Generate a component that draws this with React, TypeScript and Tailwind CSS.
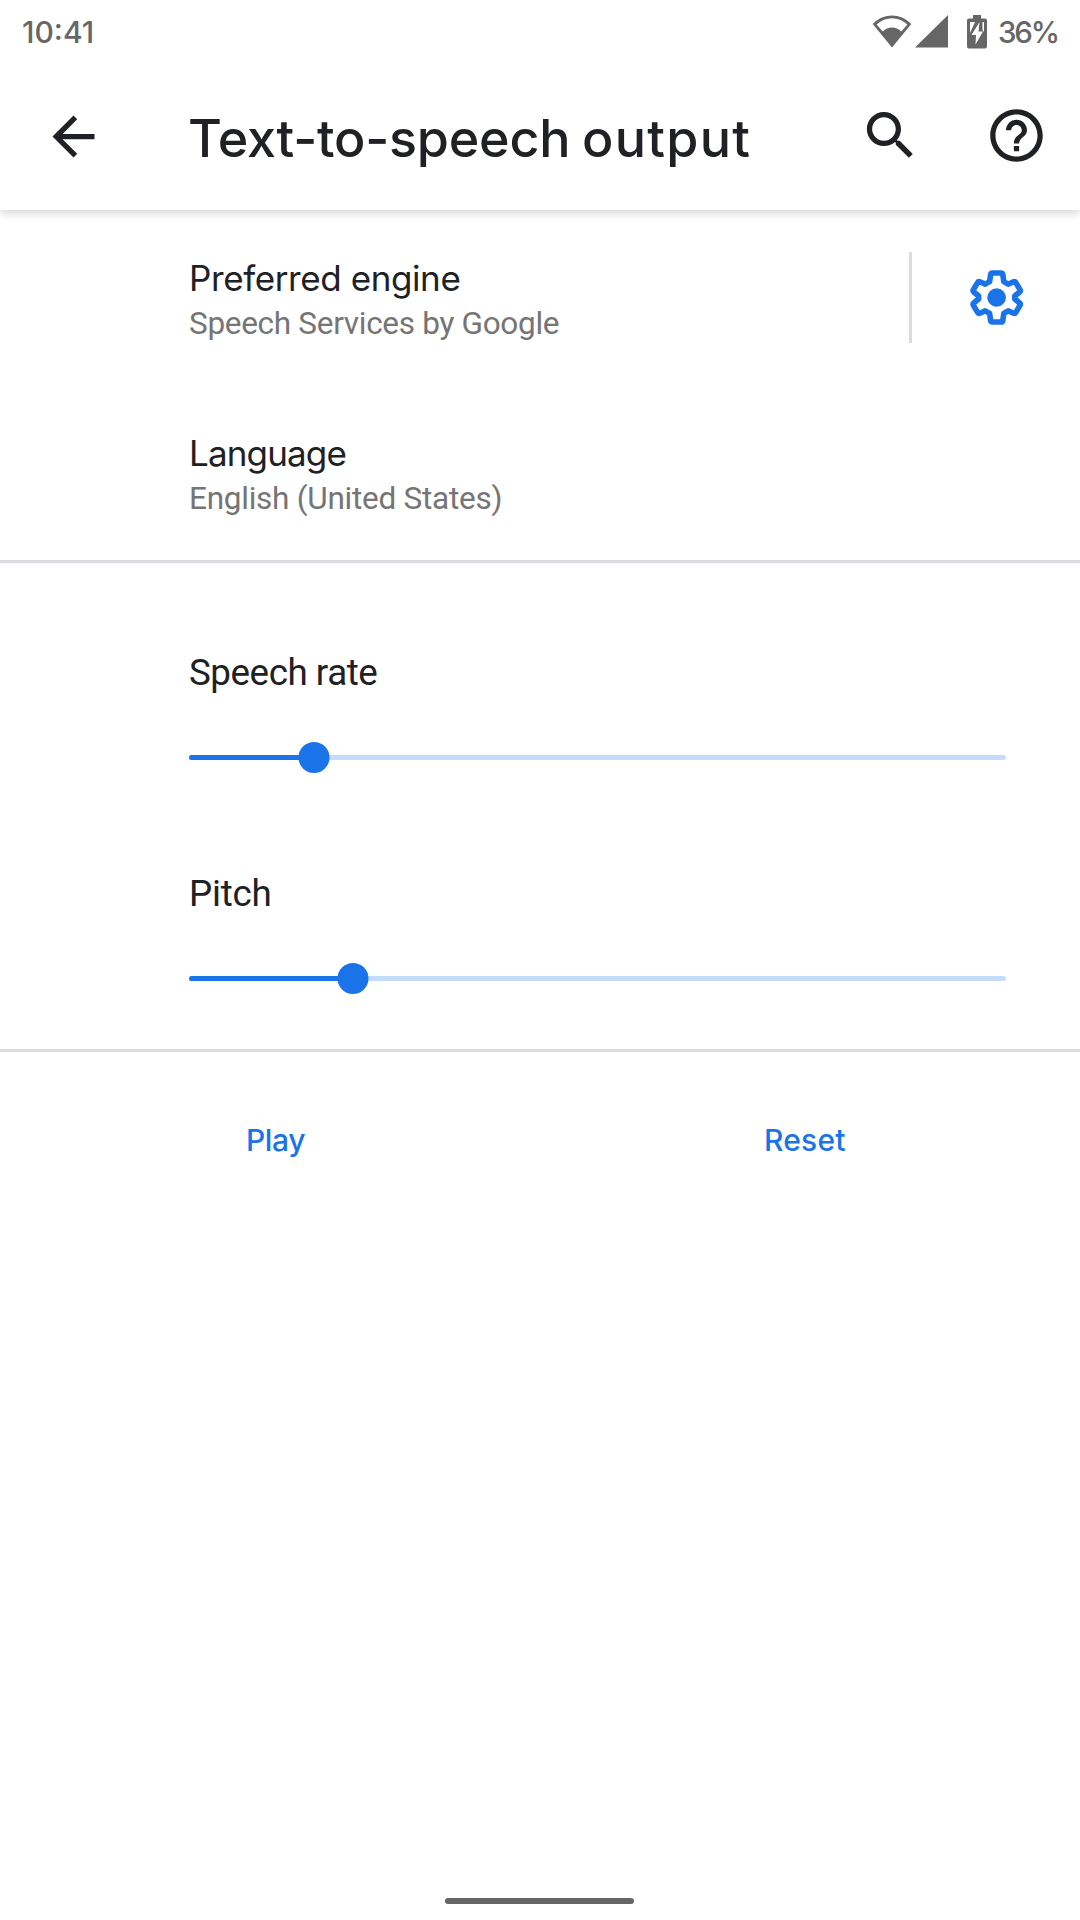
import React from "react";

const sans = "font-['Inter','Roboto',sans-serif]";

function StatusBar() {
  return (
    <div className={`relative z-10 flex h-16 items-center justify-between bg-white pl-[22px] pr-[22px] text-[#666666] ${sans}`}>
      <span className="text-[30px] leading-[64px] font-medium tracking-[0px]">10:41</span>
      <div className="flex items-center">
        <svg width="40" height="34" viewBox="0 0 40 34" fill="#666666">
          <path fillRule="evenodd" d="M.7 9C12-2.2 28-2.2 39.3 9L20 32.5ZM4.6 9.5L10.8 16.5C15.5 11.3 24.5 11.3 29.2 16.5L35.4 9.5C26 1.3 14 1.3 4.6 9.5Z" />
        </svg>
        <svg className="ml-[3px]" width="33" height="34" viewBox="0 0 33 34" fill="#666666">
          <path d="M33 0V32.5H0Z" />
        </svg>
        <svg className="ml-[19px]" width="20" height="34" viewBox="0 0 20 34" fill="#666666">
          <path fillRule="evenodd" d="M6 0H14V3.5H18Q20 3.5 20 5.5V31.5Q20 33.5 18 33.5H2Q0 33.5 0 31.5V5.5Q0 3.5 2 3.5H6ZM3 7V18L8 7ZM15.5 7V15L17 17V7ZM12.5 7L4.5 20H9L8.5 29.5L16 16.5H11.5Z" />
        </svg>
        <span className="ml-[11px] text-[29.5px] leading-[64px] font-medium tracking-[-2.1px]">36%</span>
      </div>
    </div>
  );
}

function Header() {
  return (
    <header className="flex h-[146px] items-start bg-white pl-[42px] shadow-[0_2px_9px_1px_rgba(0,0,0,0.17)]">
      <svg className="mt-[41px] shrink-0" width="63" height="63" viewBox="0 0 24 24" fill="#202124">
        <path d="M20 11H7.83l5.59-5.59L12 4l-8 8 8 8 1.41-1.41L7.83 13H20v-2z" />
      </svg>
      <h1 className={`ml-[83px] mt-[40px] w-[641px] shrink-0 text-[52px] leading-[70px] font-medium tracking-[-0.2px] [word-spacing:-2px] whitespace-nowrap text-[#202124] ${sans}`}>
        Text-to-speech <span className="tracking-[1.3px]">output</span>
      </h1>
      <svg className="ml-[30px] mt-[40px] shrink-0" width="63" height="63" viewBox="0 0 24 24" fill="#202124">
        <path d="M15.5 14h-.79l-.28-.27C15.41 12.59 16 11.11 16 9.5 16 5.91 13.09 3 9.5 3S3 5.91 3 9.5 5.91 16 9.5 16c1.61 0 3.09-.59 4.23-1.57l.27.28v.79l5 4.99L20.49 19l-4.99-5zm-6 0C7.01 14 5 11.99 5 9.5S7.01 5 9.5 5 14 7.01 14 9.5 11.99 14 9.5 14z" />
      </svg>
      <svg className="ml-[63px] mt-[40px] shrink-0" width="63" height="63" viewBox="0 0 24 24" fill="#202124">
        <path d="M11 18h2v-2h-2v2zm1-16C6.48 2 2 6.48 2 12s4.48 10 10 10 10-4.48 10-10S17.52 2 12 2zm0 18c-4.41 0-8-3.59-8-8s3.59-8 8-8 8 3.59 8 8-3.59 8-8 8zm0-14c-2.21 0-4 1.79-4 4h2c0-1.1.9-2 2-2s2 .9 2 2c0 2-3 1.75-3 5h2c0-2.25 3-2.5 3-5 0-2.21-1.79-4-4-4z" />
      </svg>
    </header>
  );
}

function Slider({ fill }: { fill: number }) {
  return (
    <div className="relative mr-[74px] flex h-[31px] items-center">
      <div className="h-[5px] w-full rounded-full bg-[#c5dbfa]">
        <div className="h-full rounded-full bg-[#1a73e8]" style={{ width: fill }} />
      </div>
      <div className="absolute top-0 size-[31px] -translate-x-1/2 rounded-full bg-[#1a73e8]" style={{ left: fill }} />
    </div>
  );
}

export default function App() {
  return (
    <div className="flex h-[1920px] w-[1080px] flex-col overflow-hidden bg-white font-['Roboto',sans-serif]">
      <StatusBar />
      <Header />

      <section className="h-[353px] border-b-[3px] border-[#dadce0] pl-[189px]">
        <div className="flex h-[175px] items-center">
          <div className="w-[720px] pt-[6px]">
            <p className={`text-[35px] leading-[44px] tracking-[-0.4px] text-[#202124] ${sans}`}>Preferred engine</p>
            <p className="mt-[2px] text-[31.5px] leading-[44px] tracking-[-0.3px] text-[#757575]">Speech Services by Google</p>
          </div>
          <div className="h-[91px] w-[3px] bg-[#dadce0]" />
          <svg className="ml-[53px]" width="63" height="63" viewBox="0 0 63 63" fill="none">
            <path d="M27.5 7H36Q37.6 7 37.8 8.5L38.8 15.6L43.2 18.2L48.4 15.8Q50 15.2 50.8 16.6L55 23.6Q55.8 25 54.6 26L49.8 30V33L54.6 37Q55.8 38 55 39.4L50.8 46.4Q50 47.8 48.4 47.2L43.2 44.8L38.8 47.4L37.8 54.5Q37.6 56 36 56H27.5Q25.8 56 25.6 54.5L24.6 47.4L20.2 44.8L15 47.2Q13.4 47.8 12.6 46.4L8.4 39.4Q7.6 38 8.8 37L13.6 33V30L8.8 26Q7.6 25 8.4 23.6L12.6 16.6Q13.4 15.2 15 15.8L20.2 18.2L24.6 15.6L25.6 8.5Q25.8 7 27.5 7Z" stroke="#1a73e8" strokeWidth="5.6" strokeLinejoin="round" />
            <circle cx="31.6" cy="31.5" r="9.3" fill="#1a73e8" />
          </svg>
        </div>
        <div className="h-[175px] pt-[46px]">
          <p className={`text-[35px] leading-[44px] tracking-[-0.85px] text-[#202124] ${sans}`}>Language</p>
          <p className="mt-[2px] text-[31.5px] leading-[44px] tracking-[-0.25px] text-[#757575]">English (United States)</p>
        </div>
      </section>

      <section className="h-[489px] border-b-[3px] border-[#dadce0] pl-[189px] pt-[87px]">
        <p className="mb-[47px] text-[36.75px] leading-[45px] tracking-[-0.45px] text-[#202124]">Speech rate</p>
        <Slider fill={124.5} />
        <p className="mb-[47px] mt-[98px] text-[36.75px] leading-[45px] tracking-[-0.2px] text-[#202124]">Pitch</p>
        <Slider fill={163.5} />
      </section>

      <div className={`flex pt-[66px] text-[30px] leading-[44px] font-medium text-[#1a73e8] ${sans}`}>
        <button className="ml-[246px] w-[518px] text-left tracking-[-0.4px]">Play</button>
        <button className="text-left tracking-[0.2px]">Reset</button>
      </div>

      <div className="mb-[16px] ml-[445px] mt-auto h-[6px] w-[189px] rounded-full bg-[#666666]" />
    </div>
  );
}
